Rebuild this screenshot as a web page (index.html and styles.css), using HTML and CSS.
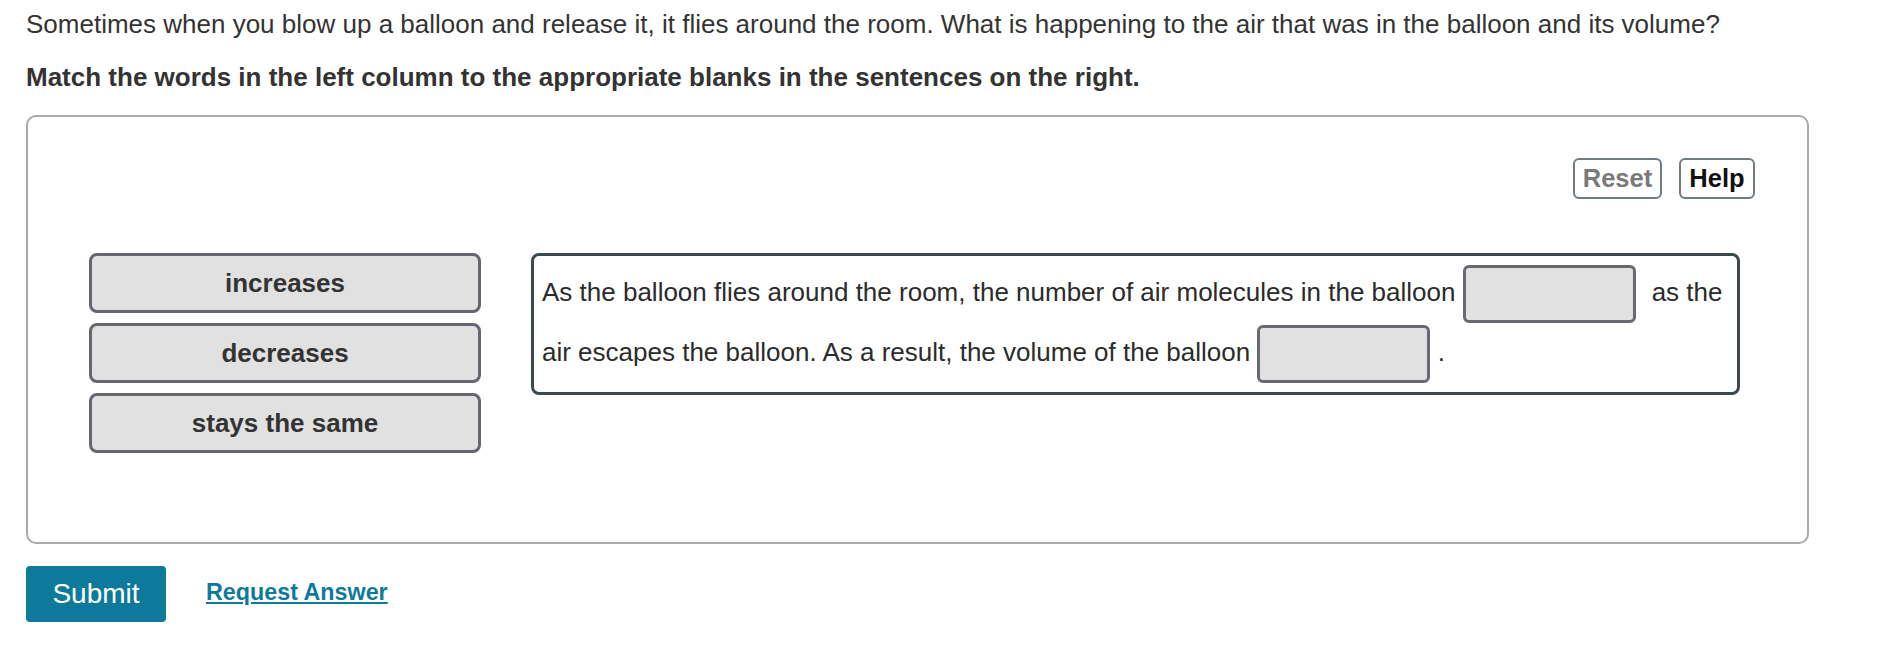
FILE: index.html
```html
<!DOCTYPE html>
<html lang="en">
<head>
<meta charset="utf-8">
<title>Balloon matching</title>
<link rel="stylesheet" href="styles.css">
</head>
<body>
<div class="page">
  <p class="question">Sometimes when you blow up a balloon and release it, it flies around the room. What is happening to the air that was in the balloon and its volume?</p>
  <p class="instruction">Match the words in the left column to the appropriate blanks in the sentences on the right.</p>

  <div class="panel">
    <div class="toolbar">
      <button class="tool-btn reset" type="button">Reset</button>
      <button class="tool-btn help" type="button">Help</button>
    </div>
    <div class="matching">
      <div class="word-bank">
        <div class="word">increases</div>
        <div class="word">decreases</div>
        <div class="word">stays the same</div>
      </div>
      <div class="sentence">As the balloon flies around the room, the number of air molecules in the balloon <span class="blank"></span><span class="after">as the</span> air escapes the balloon. As a result, the volume of the balloon <span class="blank"></span> .</div>
    </div>
  </div>

  <div class="actions">
    <button class="submit" type="button">Submit</button>
    <a class="request" href="#">Request Answer</a>
  </div>
</div>
</body>
</html>
```

FILE: styles.css
```css
html, body {
  margin: 0;
  padding: 0;
  background: #ffffff;
}

body {
  font-family: "Liberation Sans", Arial, Helvetica, sans-serif;
  color: #333333;
  font-size: 26px;
}

.page {
  padding: 9px 0 0 26px;
  width: 1783px;
}

.question {
  margin: 0;
  line-height: 30px;
}

.instruction {
  margin: 23px 0 0;
  line-height: 30px;
  font-weight: bold;
}

.panel {
  margin-top: 23px;
  box-sizing: border-box;
  height: 429px;
  border: 2px solid #a9a9a9;
  border-radius: 10px;
  padding: 41px 52px 0 61px;
}

.toolbar {
  display: flex;
  justify-content: flex-end;
  gap: 17px;
}

.tool-btn {
  box-sizing: border-box;
  height: 41px;
  border: 2px solid #6f7b80;
  border-radius: 6px;
  background: #ffffff;
  font-family: inherit;
  font-size: 25.5px;
  font-weight: bold;
  padding: 0;
  line-height: 37px;
}

.reset {
  width: 89px;
  color: #7a7a7a;
}

.help {
  width: 76px;
  color: #111111;
}

.matching {
  display: flex;
  align-items: flex-start;
  gap: 50px;
  margin-top: 54px;
}

.word-bank {
  display: flex;
  flex-direction: column;
  gap: 10px;
  width: 392px;
}

.word {
  box-sizing: border-box;
  height: 60px;
  border: 3px solid #65666f;
  border-radius: 8px;
  background: #e1e1e1;
  text-align: center;
  line-height: 54px;
  font-weight: bold;
  color: #333333;
}

.sentence {
  box-sizing: border-box;
  width: 1209px;
  border: 3px solid #3e494e;
  border-radius: 8px;
  padding: 8px 9px 8px 8px;
  line-height: 30px;
  color: #2b2b2b;
}

.blank {
  display: inline-block;
  box-sizing: border-box;
  width: 173px;
  height: 58px;
  margin: 1px 0;
  vertical-align: middle;
  border: 3px solid #696973;
  border-radius: 6px;
  background: #e1e1e1;
}

.after {
  margin-left: 16px;
}

.actions {
  display: flex;
  align-items: center;
  gap: 40px;
  margin-top: 22px;
}

.submit {
  box-sizing: border-box;
  width: 140px;
  height: 56px;
  border: none;
  border-radius: 4px;
  background: #0e7a9b;
  color: #ffffff;
  font-family: inherit;
  font-size: 28px;
  padding: 0;
}

.request {
  font-size: 23.3px;
  font-weight: bold;
  color: #0e7a9b;
  text-decoration: underline;
  margin-bottom: 4px;
}
```
